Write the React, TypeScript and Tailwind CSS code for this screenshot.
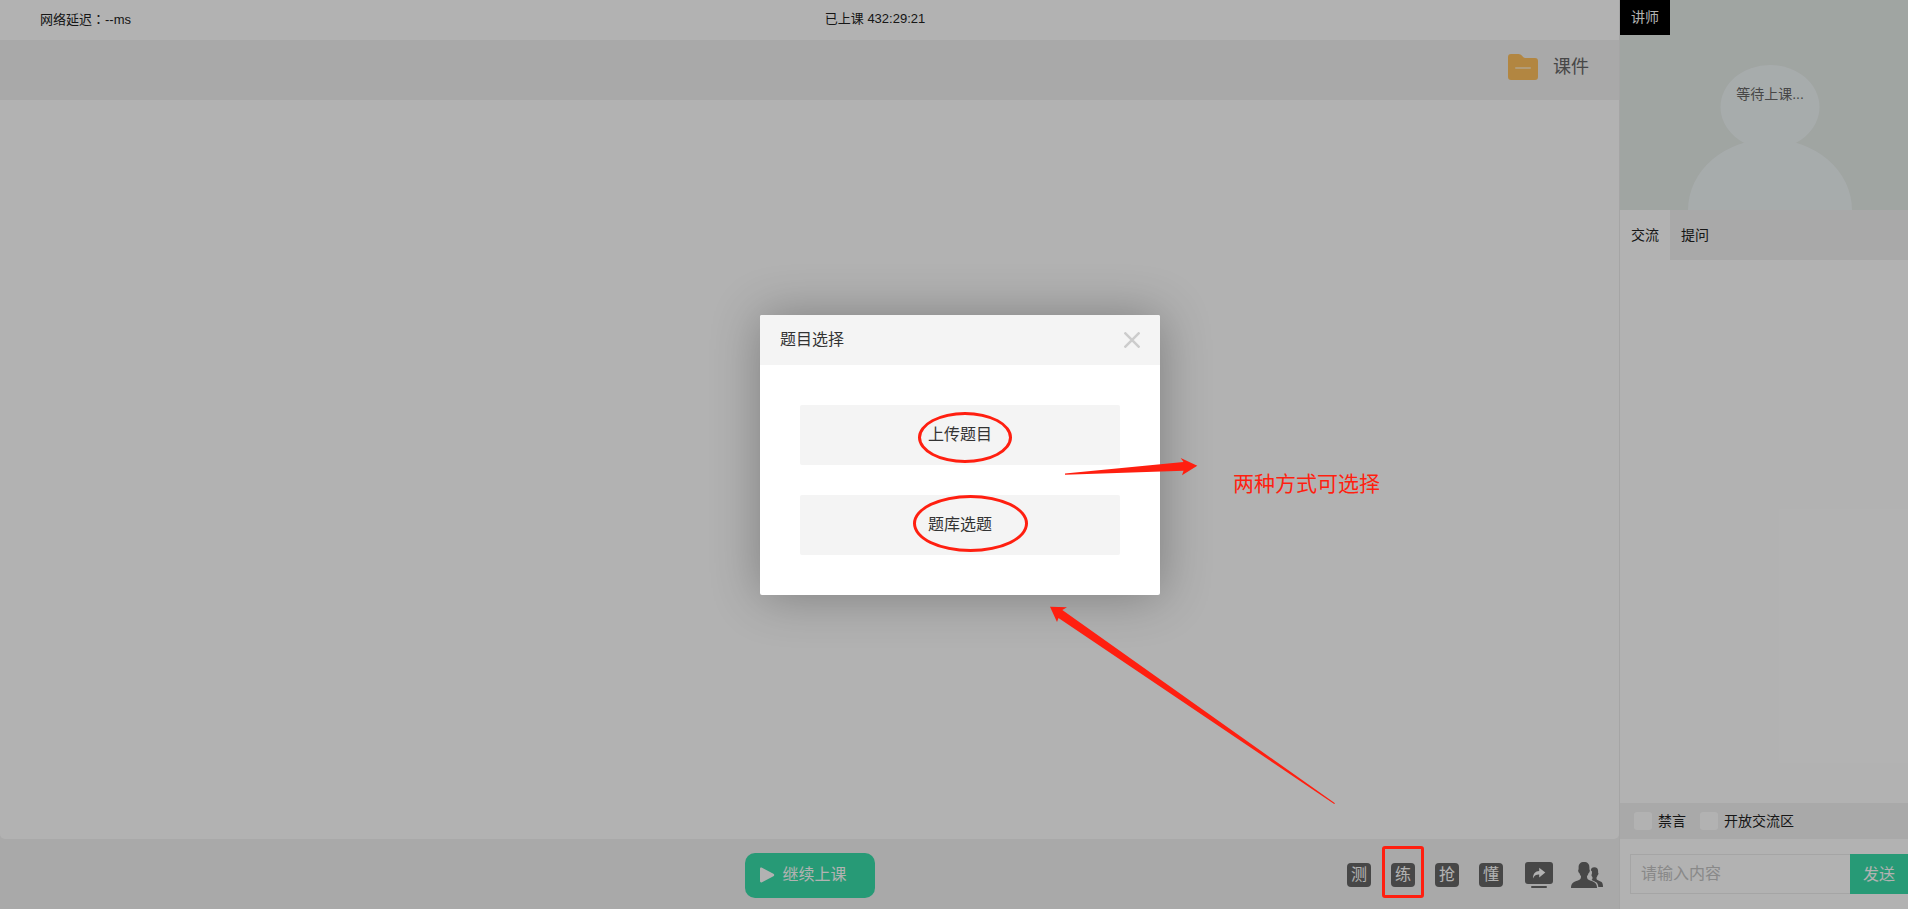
import { FC, ReactNode } from "react";

interface ToolButtonProps {
  label: string
  children?: ReactNode
}

const ToolButton: FC<ToolButtonProps> = ({ label, children }) => {
  return (
    <button className="relative flex h-6 w-6 items-center justify-center rounded bg-[#666] text-base leading-6 text-white">
      {label}
      {children}
    </button>
  );
}

const FolderIcon = () => (
  <svg className="h-[26px] w-[30px]" viewBox="0 0 30 26" aria-hidden="true">
    <path fill="#ffc15e" d="M3 0h7.500c1.500 0 2.500.8 3.500 1.800.9 1 1.800 2.200 3.200 2.200H27a3 3 0 0 1 3 3v16a3 3 0 0 1-3 3H3a3 3 0 0 1-3-3V3a3 3 0 0 1 3-3z" />
    <path stroke="#ffe0ad" strokeWidth="2" strokeLinecap="round" d="M8 14h14" />
  </svg>
)

const ShareIcon = () => (
  <svg className="h-[26px] w-7" viewBox="0 0 28 26" aria-hidden="true">
    <rect width="28" height="22" rx="3" fill="#666" />
    <rect x="6" y="24" width="16" height="2" rx="1" fill="#666" />
    <path fill="#fff" d="M14.200 5.800 20.300 10.600l-6.100 4.800v-3c-2.800-.1-4.700.8-6.200 4 .1-4.600 2.200-7 6.200-7.300z" />
  </svg>
)

const UsersIcon = () => (
  <svg className="h-[26px] w-8" viewBox="0 0 32 26" fill="#666" aria-hidden="true">
    <path d="M13 0c3.600 0 5.400 2 5.400 5.400v2.200c.6.300.5 1.400.1 2.400-.2.500-.5.900-.9 1-.3 1.300-.9 2.400-1.600 3.200 0 2 .4 3 1.600 3.600 1.600.9 4.600 1.600 6.400 2.900 1.500 1.100 2 2.900 2 5.300H0c0-2.400.5-4.200 2-5.300 1.800-1.300 4.800-2 6.400-2.900 1.200-.6 1.600-1.600 1.600-3.600-.7-.8-1.300-1.900-1.600-3.200-.4-.1-.7-.5-.9-1-.4-1-.5-2.100.1-2.400V5.400C7.600 2 9.400 0 13 0z" />
    <path d="M23.300 5.300c2.600 0 3.800 1.500 3.800 3.800v1.700c.5.200.4 1.100.1 1.800-.1.300-.4.600-.6.700-.3.900-.6 1.500-1.100 2.100 0 1.500.2 2.200 1 2.700 1.100.6 2.800 1.100 4 2 1.100.9 1.500 2.600 1.500 4.900h-4.700c-.1-2.100-.8-3.700-2.100-4.700-1.300-1-3.200-1.500-4.700-2.300.9-.6 1-1.300 1-2.700-.5-.6-.9-1.200-1.100-2 .5-1.100.7-2.400.6-3.600-.1-.4-.5-.8-1.100-1.100.1-2.200 1.200-3.300 3.400-3.300z" />
  </svg>
)

const VideoPanel = () => {
  return (
    <div className="relative h-[210px] overflow-hidden bg-[#e5ece8]">
      <div className="relative w-[300px]">
        <svg className="block h-[210px] w-full" viewBox="0 0 300 210" fill="#f0f6f7" aria-hidden="true">
          <ellipse cx="150" cy="107" rx="49.500" ry="42" />
          <ellipse cx="150" cy="210" rx="82" ry="71" />
        </svg>
        <p className="absolute inset-x-0 top-[84px] text-center text-sm text-[#666]">等待上课...</p>
      </div>
      <span className="absolute left-0 top-0 h-[35px] w-[50px] bg-black text-center text-sm leading-[35px] text-white">讲师</span>
    </div>
  );
}

const Sidebar = () => {
  return (
    <aside className="flex w-72 shrink-0 flex-col bg-white">
      <VideoPanel />
      <div className="flex h-[50px] bg-[#f2f2f2] text-sm text-[#222]">
        <button className="w-[50px] bg-white">交流</button>
        <button className="w-[50px]">提问</button>
      </div>
      <div className="flex-1" />
      <div className="flex h-9 items-center gap-3.5 bg-[#f2f2f2] pl-3.5 text-sm text-[#222]">
        <label className="flex items-center gap-1.5">
          <input type="checkbox" className="h-[18px] w-[18px] appearance-none rounded-[3px] bg-white checked:bg-[#39dda9]" />
          禁言
        </label>
        <label className="flex items-center gap-1.5">
          <input type="checkbox" className="h-[18px] w-[18px] appearance-none rounded-[3px] bg-white checked:bg-[#39dda9]" />
          开放交流区
        </label>
      </div>
      <div className="flex h-[70px] items-center pl-2.5 text-base">
        <input
          type="text"
          aria-label="请输入内容"
          placeholder="请输入内容"
          className="h-10 min-w-0 flex-1 border border-r-0 border-[#ededed] px-2.5 placeholder:text-[#c4c4c4]"
        />
        <button className="h-10 w-[58px] bg-[#39dda9] pt-0.5 text-white">发送</button>
      </div>
    </aside>
  );
}

const QuestionDialog = () => {
  return (
    <div role="dialog" aria-labelledby="dialog-title" className="relative w-[400px] rounded-xs bg-white text-[#333] shadow-[1px_1px_50px_rgba(0,0,0,0.3)]">
      <div className="flex h-[50px] items-center justify-between rounded-t-xs bg-[#f4f4f4] px-5">
        <h2 id="dialog-title" className="text-base">题目选择</h2>
        <button aria-label="关闭">
          <svg className="h-4 w-4" viewBox="0 0 16 16" stroke="#ccc" strokeWidth="2.500" aria-hidden="true">
            <path d="M.5.500l15 15M15.500.500l-15 15" />
          </svg>
        </button>
      </div>
      <div className="flex flex-col gap-[30px] p-10">
        <button className="relative h-[60px] rounded-xs bg-[#f4f4f4] text-base">
          上传题目
          <span className="absolute left-[118px] top-[7px] h-[51px] w-[94px] rounded-[50%] border-3 border-[#ff1f10]" />
        </button>
        <button className="relative h-[60px] rounded-xs bg-[#f4f4f4] text-base">
          题库选题
          <span className="absolute left-[113px] top-0 h-[57px] w-[115px] rounded-[50%] border-3 border-[#ff1f10]" />
        </button>
      </div>

      {/* notes */}
      <svg className="absolute left-[305px] top-[141px] h-[22px] w-[134px]" viewBox="0 0 134 22" fill="#ff1f10" aria-hidden="true">
        <path d="M0 17.500 118.500 6l-2.800-4 16.600 7.700L117 19.300l1.500-4.600L0 18.800z" />
      </svg>
      <p className="absolute left-[473px] top-[154px] whitespace-nowrap text-[21px] leading-[30px] text-[#ff1f10]">两种方式可选择</p>
      <svg className="absolute left-[290px] top-[291px] h-[200px] w-[286px]" viewBox="0 0 286 200" fill="#ff1f10" aria-hidden="true">
        <path d="M0 .7l17 .5L12.300 4 285 197.300l-.8.700L8.500 12 7 16z" />
      </svg>
    </div>
  );
}

export default function App() {
  return (
    <div className="relative h-screen overflow-hidden bg-white pb-px font-['Liberation_Sans','Noto_Sans_CJK_SC',sans-serif]">
      <div className="flex h-full">
        <main className="flex min-w-0 flex-1 flex-col border-r border-[#ededed] bg-[#f2f2f2]">
          <header className="flex h-10 items-center bg-white pb-0.5 pl-10 text-[13px] text-[#222]">
            <span>网络延迟<span className="font-['Noto_Sans_CJK_TC',sans-serif]" lang="zh-TW">：</span>--ms</span>
            <span className="flex-1 text-center">已上课 432:29:21</span>
          </header>
          <div className="flex h-[60px] items-center justify-end pb-1.5 pr-[30px]">
            <button className="flex items-center gap-[15px] text-lg text-[#666]">
              <FolderIcon />
              课件
            </button>
          </div>
          <div className="flex-1 rounded-b-[5px] bg-white" />
          <footer className="grid h-[70px] grid-cols-[1fr_auto_1fr] items-center pt-0.5">
            <button className="col-start-2 flex h-[45px] w-[130px] items-center gap-2 rounded-[10px] bg-[#39dda9] pl-[15px] text-base text-white">
              <svg className="h-4 w-[15px]" viewBox="0 0 15 16" fill="#fff" aria-hidden="true">
                <path d="M0 2c0-1.200.9-1.700 2-1.200l11.400 6c1.100.6 1.100 1.800 0 2.400L2 15.300c-1.100.6-2 0-2-1.200z" />
              </svg>
              继续上课
            </button>
            <div className="flex items-center justify-end gap-5 pr-4">
              <ToolButton label="测" />
              <ToolButton label="练">
                <span className="absolute -left-[9px] -top-[17px] z-20 h-[52px] w-[42px] rounded-[3px] border-3 border-[#ff1f10]" />
              </ToolButton>
              <ToolButton label="抢" />
              <ToolButton label="懂" />
              <button aria-label="共享屏幕" className="ml-0.5"><ShareIcon /></button>
              <button aria-label="学员" className="-ml-0.5"><UsersIcon /></button>
            </div>
          </footer>
        </main>
        <Sidebar />
      </div>

      <div className="absolute inset-x-0 bottom-px top-0 z-10 flex items-center justify-center bg-black/30 pl-3">
        <QuestionDialog />
      </div>
    </div>
  );
}
